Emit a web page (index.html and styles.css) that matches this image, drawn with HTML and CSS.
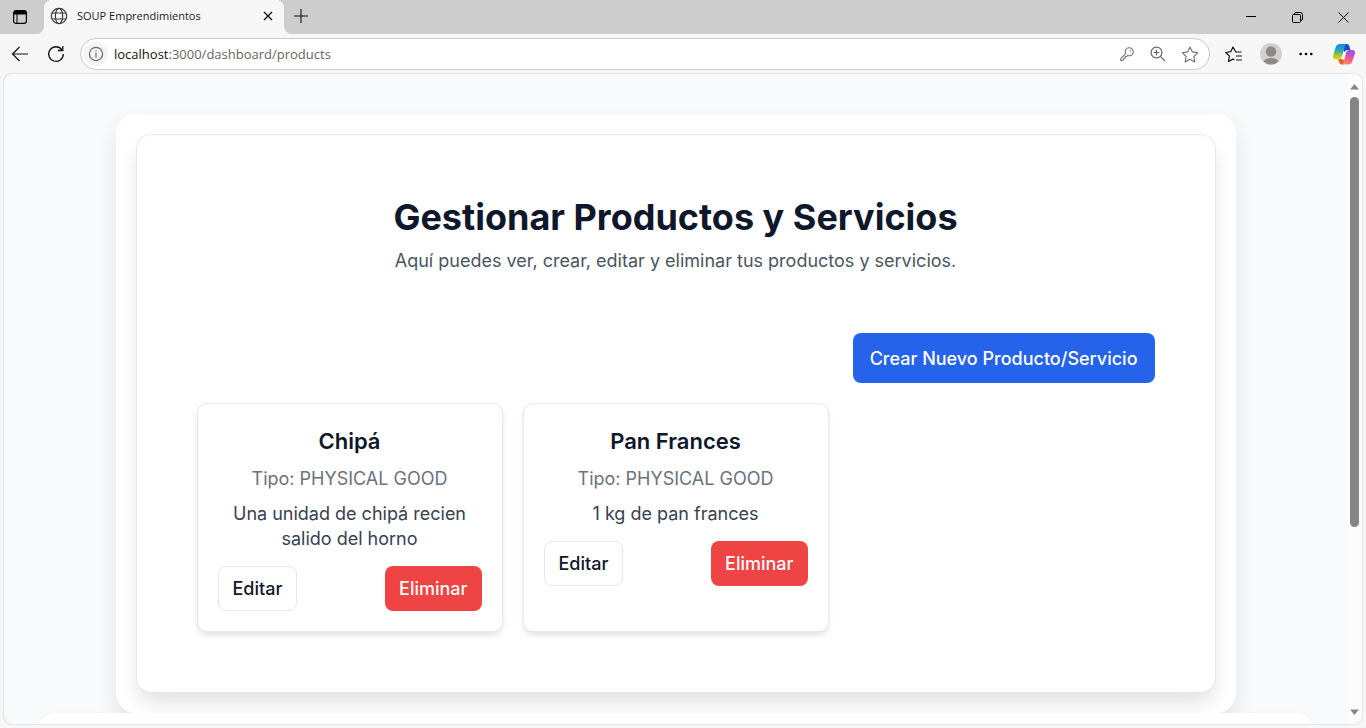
FILE: index.html
```html
<!DOCTYPE html>
<html lang="es">
<head>
<meta charset="utf-8">
<meta name="viewport" content="width=device-width, initial-scale=1">
<title>SOUP Emprendimientos</title>
<link rel="stylesheet" href="styles.css">
</head>
<body>
<div class="browser">
  <div class="tabstrip">
    <button class="icon-btn workspace" aria-label="Áreas de trabajo">
      <svg width="16" height="16" viewBox="0 0 16 16"><rect x="1.6" y="1.6" width="12.8" height="12.8" rx="2.4" fill="none" stroke="#000" stroke-width="1.2"/><path d="M1.6 5.4V4a2.4 2.4 0 0 1 2.4-2.4h8A2.4 2.4 0 0 1 14.4 4v1.4z"/><path d="M5 5v9.4" stroke="#000" stroke-width="1"/></svg>
    </button>
    <div class="tab">
      <svg width="18" height="18" viewBox="0 0 18 18" fill="none" stroke="#3a3a3a" stroke-width="1.2"><circle cx="9" cy="9" r="7.7"/><ellipse cx="9" cy="9" rx="3.6" ry="7.7"/><path d="M2 6h14M2 12h14"/></svg>
      <span class="tab-title">SOUP Emprendimientos</span>
      <button class="icon-btn" aria-label="Cerrar pestaña"><svg width="10" height="10" viewBox="0 0 10 10" stroke="#111" stroke-width="1.4"><path d="M1 1l8 8M9 1L1 9"/></svg></button>
    </div>
    <button class="icon-btn new-tab" aria-label="Nueva pestaña"><svg width="14" height="14" viewBox="0 0 14 14" stroke="#111" stroke-width="1.1"><path d="M7 0v14M0 7h14"/></svg></button>
    <div class="window-controls">
      <button class="icon-btn" aria-label="Minimizar"><svg width="10" height="10" viewBox="0 0 10 10" stroke="#000"><path d="M0 4.5h10"/></svg></button>
      <button class="icon-btn" aria-label="Restaurar"><svg width="11" height="11" viewBox="0 0 11 11" fill="none" stroke="#000"><rect x=".5" y="2.5" width="8" height="8" rx="1"/><path d="M2.5 2.500V2q0-1.500 1.500-1.500h4.500q2 0 2 2V7q0 1.500-1.500 1.500"/></svg></button>
      <button class="icon-btn" aria-label="Cerrar"><svg width="11" height="11" viewBox="0 0 11 11" stroke="#000"><path d="M.5.5l10 10M10.500.5l-10 10"/></svg></button>
    </div>
  </div>

  <div class="toolbar">
    <button class="icon-btn" aria-label="Atrás"><svg width="18" height="16" viewBox="0 0 18 16" fill="none" stroke="#111" stroke-width="1.200"><path d="M17 8H1.500M8.500 1l-7 7 7 7"/></svg></button>
    <button class="icon-btn" aria-label="Actualizar"><svg width="18" height="18" viewBox="0 0 18 18" fill="none" stroke="#111" stroke-width="1.300"><path d="M16.300 9A7.300 7.300 0 1 1 14.800 4.600M15.800 1v4.500h-5"/></svg></button>
    <div class="address">
      <button class="icon-btn site-info" aria-label="Información del sitio"><svg width="16" height="16" viewBox="0 0 16 16" fill="none" stroke="#6b6b6b" stroke-width="1.200"><circle cx="8" cy="8" r="6.600"/><path d="M8 7v4.500M8 4.500v1.300"/></svg></button>
      <div class="url"><span class="host">localhost</span>:3000/dashboard/products</div>
      <button class="icon-btn" aria-label="Contraseñas"><svg width="16" height="16" viewBox="0 0 16 16" fill="none" stroke="#767676" stroke-width="1.100"><path d="M6.700 7.600A4 4 0 1 1 8.600 9.400L7.600 10.500H6.200V12H4.800v1.400L3.800 14.400H1.800v-2z" stroke-linejoin="round"/><circle cx="11.300" cy="4.700" r=".7" fill="#767676" stroke="none"/></svg></button>
      <button class="icon-btn" aria-label="Zoom"><svg width="16" height="16" viewBox="0 0 16 16" fill="none" stroke="#666" stroke-width="1.200"><circle cx="6.500" cy="6.500" r="5.400"/><path d="M10.400 10.400l4.600 4.600M6.500 3.700v5.600M3.700 6.500h5.600"/></svg></button>
      <button class="icon-btn" aria-label="Favorito"><svg width="18" height="17" viewBox="0 0 18 17" fill="none" stroke="#707070" stroke-width="1.100" stroke-linejoin="round"><path d="M9 1l2.400 4.900 5.400.8-3.900 3.800.9 5.400L9 13.300l-4.800 2.600.9-5.400L1.200 6.700l5.400-.8z"/></svg></button>
    </div>
    <div class="actions">
      <button class="icon-btn" aria-label="Favoritos"><svg width="18" height="17" viewBox="0 0 18 17" fill="none" stroke="#111" stroke-width="1.200" stroke-linejoin="round"><path d="M16.500 6h-5.700L8 1 5.700 5.700l-5 .8 3.700 3.700-.9 5.300 4.500-2.400 1.300.7M11 10h6M11 14h6"/></svg></button>
      <button class="icon-btn" aria-label="Perfil"><svg width="22" height="22" viewBox="0 0 22 22"><circle cx="11" cy="11" r="11" fill="#d3d1cd"/><circle cx="11" cy="8.500" r="5.200" fill="#8d8a86"/><path d="M3.500 18.500Q5 15 11 15t7.500 3.500A11 11 0 0 1 3.500 18.500z" fill="#8d8a86"/></svg></button>
      <button class="icon-btn" aria-label="Más opciones"><svg width="14" height="4" viewBox="0 0 14 4"><circle cx="1.700" cy="2" r="1.300"/><circle cx="7" cy="2" r="1.300"/><circle cx="12.300" cy="2" r="1.300"/></svg></button>
      <button class="icon-btn copilot" aria-label="Copilot">
        <svg width="22" height="21" viewBox="0 0 22 21">
          <defs>
            <linearGradient id="left" x1="0" y1="0" x2="0" y2="1"><stop stop-color="#1688e8"/><stop offset=".4" stop-color="#27a6b4"/><stop offset=".75" stop-color="#9fcb37"/><stop offset="1" stop-color="#f9d400"/></linearGradient>
            <linearGradient id="right" x1=".3" y1="0" x2="0" y2="1"><stop stop-color="#a44be8"/><stop offset=".5" stop-color="#ee5b8f"/><stop offset="1" stop-color="#ff9a4a"/></linearGradient>
          </defs>
          <path d="M12 0h2q1.700 0 2.300 2l1.200 4h-3q-2 0-2.600 2L9 5z" fill="#174fc0"/>
          <path d="M5 15h4l3 2-1.500 3.500H8.500Q6.600 20.500 6 18z" fill="#ef5b3c"/>
          <path d="M7 0h7q-1.600.5-2.200 2.600L9 12.500Q8.200 15.500 5.500 15.500H3Q-.8 15.500.2 11.500L2.600 3.500Q3.600 0 7 0z" fill="url(#left)"/>
          <path d="M15 20.500H8.500q1.500-.5 2.200-2.600L13 9q.8-3 3.500-3H19q3.800 0 2.800 4l-2.400 7q-1 3.500-4.400 3.500z" fill="url(#right)"/>
        </svg>
      </button>
    </div>
  </div>

  <div class="viewport">
    <div class="page">
      <main class="shell">
        <section class="panel">
          <header class="heading">
            <h1>Gestionar Productos y Servicios</h1>
            <p>Aquí puedes ver, crear, editar y eliminar tus productos y servicios.</p>
          </header>
          <div class="panel-actions"><button class="btn btn-primary">Crear Nuevo Producto/Servicio</button></div>
          <div class="products">
            <article class="card">
              <h2>Chipá</h2>
              <p class="kind">Tipo: PHYSICAL GOOD</p>
              <p class="description">Una unidad de chipá recien salido del horno</p>
              <div class="card-actions"><button class="btn btn-outline">Editar</button><button class="btn btn-danger">Eliminar</button></div>
            </article>
            <article class="card">
              <h2>Pan Frances</h2>
              <p class="kind">Tipo: PHYSICAL GOOD</p>
              <p class="description">1 kg de pan frances</p>
              <div class="card-actions"><button class="btn btn-outline">Editar</button><button class="btn btn-danger">Eliminar</button></div>
            </article>
          </div>
        </section>
      </main>
      <footer class="footer"></footer>
    </div>
    <div class="scrollbar" aria-hidden="true">
      <svg width="9" height="6" viewBox="0 0 9 6" fill="#858585"><path d="M0 5.500L4.500 0 9 5.500z"/></svg>
      <div class="track"><div class="thumb"></div></div>
      <svg width="9" height="6" viewBox="0 0 9 6" fill="#858585"><path d="M0 .5L4.500 6 9 .5z"/></svg>
    </div>
  </div>
</div>
</body>
</html>
```
FILE: styles.css
```css
* { box-sizing: border-box; }
body { margin: 0; font-family: Inter, "Liberation Sans", sans-serif; color: #0f172a; }
h1, h2, p { margin: 0; }
button { font: inherit; color: inherit; }
svg { display: block; flex: none; }

.browser { height: 100vh; display: flex; flex-direction: column; background: #f7f7f7; overflow: hidden; }
.icon-btn { display: flex; align-items: center; justify-content: center; padding: 0; border: 0; background: none; }

.tabstrip { display: flex; height: 34px; flex: none; background: linear-gradient(90deg, #f7f7f7 292px, #cdcdcd 292px); }
.workspace { width: 44px; padding-right: 4px; background: #cdcdcd; border-bottom-right-radius: 8px; }
.tab { width: 240px; display: flex; align-items: center; gap: 9px; padding: 0 10px 2px 6px; background: #cdcdcd; background: radial-gradient(circle at 8px 8px, #f7f7f7 8px, #cdcdcd 8px) 0 0 / 8px 8px no-repeat, radial-gradient(circle at 0 8px, #f7f7f7 8px, #cdcdcd 8px) 100% 0 / 8px 8px no-repeat, #f7f7f7; }
.tab-title { flex: 1; font: 11px/16px "Open Sans", "Noto Sans", sans-serif; color: #1a1a1a; white-space: nowrap; }
.tab .icon-btn { width: 12px; height: 16px; }
.new-tab { flex: 1; justify-content: flex-start; padding: 0 0 2px 10px; background: #cdcdcd; border-bottom-left-radius: 8px; }
.window-controls { display: flex; background: #cdcdcd; }
.window-controls .icon-btn { width: 46px; }

.toolbar { display: flex; align-items: center; gap: 18px; height: 40px; flex: none; padding: 0 11px; }
.address { flex: 1; height: 32px; display: flex; align-items: center; gap: 15px; margin-left: -3px; padding: 0 10px 0 3px; background: #fff; border: 1px solid #cbcbcb; border-radius: 16px; }
.site-info { width: 24px; height: 24px; border-radius: 12px; background: #f4f4f4; }
.url { flex: 1; margin-left: -9px; font: 13px/20px "Open Sans", "Noto Sans", sans-serif; color: #666; white-space: nowrap; }
.host { color: #111; }
.actions { display: flex; align-items: center; gap: 17px; margin-left: -3px; }
.copilot { padding-left: 3px; }

.viewport { flex: 1; min-height: 0; display: flex; margin: 0 4px 4px; border-radius: 8px; overflow: hidden; background: #f8fafc; box-shadow: 0 0 2px #b8b8b8; }
.page { flex: 1; min-width: 0; overflow: hidden; padding-top: 40px; }
.shell { max-width: 1120px; margin: 0 auto; padding: 20px; background: #fff; border-radius: 20px; box-shadow: 0 12px 24px rgba(15, 23, 42, .09); }
.panel { padding: 60px; border: 1px solid #e5e7eb; border-radius: 15px; background: #fff; box-shadow: 0 12px 20px -3px rgba(0, 0, 0, .12); }
.heading { text-align: center; }
h1 { font-size: 36px; line-height: 45px; font-weight: 700; }
.heading p { margin-top: 8px; font-size: 18px; line-height: 25px; color: #4b5563; }
.panel-actions { display: flex; justify-content: flex-end; margin: 60px 0 20px; }
.btn { height: 45px; padding: 0 14px; border: 1px solid transparent; border-radius: 8px; font-size: 18px; line-height: 25px; font-weight: 500; white-space: nowrap; }
.btn-primary { height: 50px; padding: 0 16px; background: #2563eb; color: #fff; }
.btn-outline { background: #fff; border-color: #e2e8f0; }
.btn-danger { padding: 0 13px; background: #ef4444; color: #f8fafc; }
.products { display: grid; grid-template-columns: repeat(3, 1fr); gap: 20px; }
.card { padding: 20px; border: 1px solid #e5e7eb; border-radius: 10px; background: #fff; text-align: center; box-shadow: 0 4px 6px -1px rgba(0, 0, 0, .12); }
h2 { font-size: 22px; line-height: 35px; font-weight: 600; }
.kind { margin-top: 7px; font-size: 18px; line-height: 25px; color: #6b7280; }
.description { margin-top: 10px; font-size: 18px; line-height: 25px; color: #374151; }
.card-actions { display: flex; justify-content: space-between; margin-top: 15px; }
.footer { position: relative; height: 200px; margin: 0 33px; background: #fff; border-radius: 20px; box-shadow: 0 0 10px rgba(15, 23, 42, .02); }

.scrollbar { width: 15px; display: flex; flex-direction: column; align-items: center; gap: 7px; padding: 10px 0 9px; background: #fcfcfc; }
.track { flex: 1; }
.thumb { width: 9px; height: 71%; border-radius: 5px; background: #858585; }
```
